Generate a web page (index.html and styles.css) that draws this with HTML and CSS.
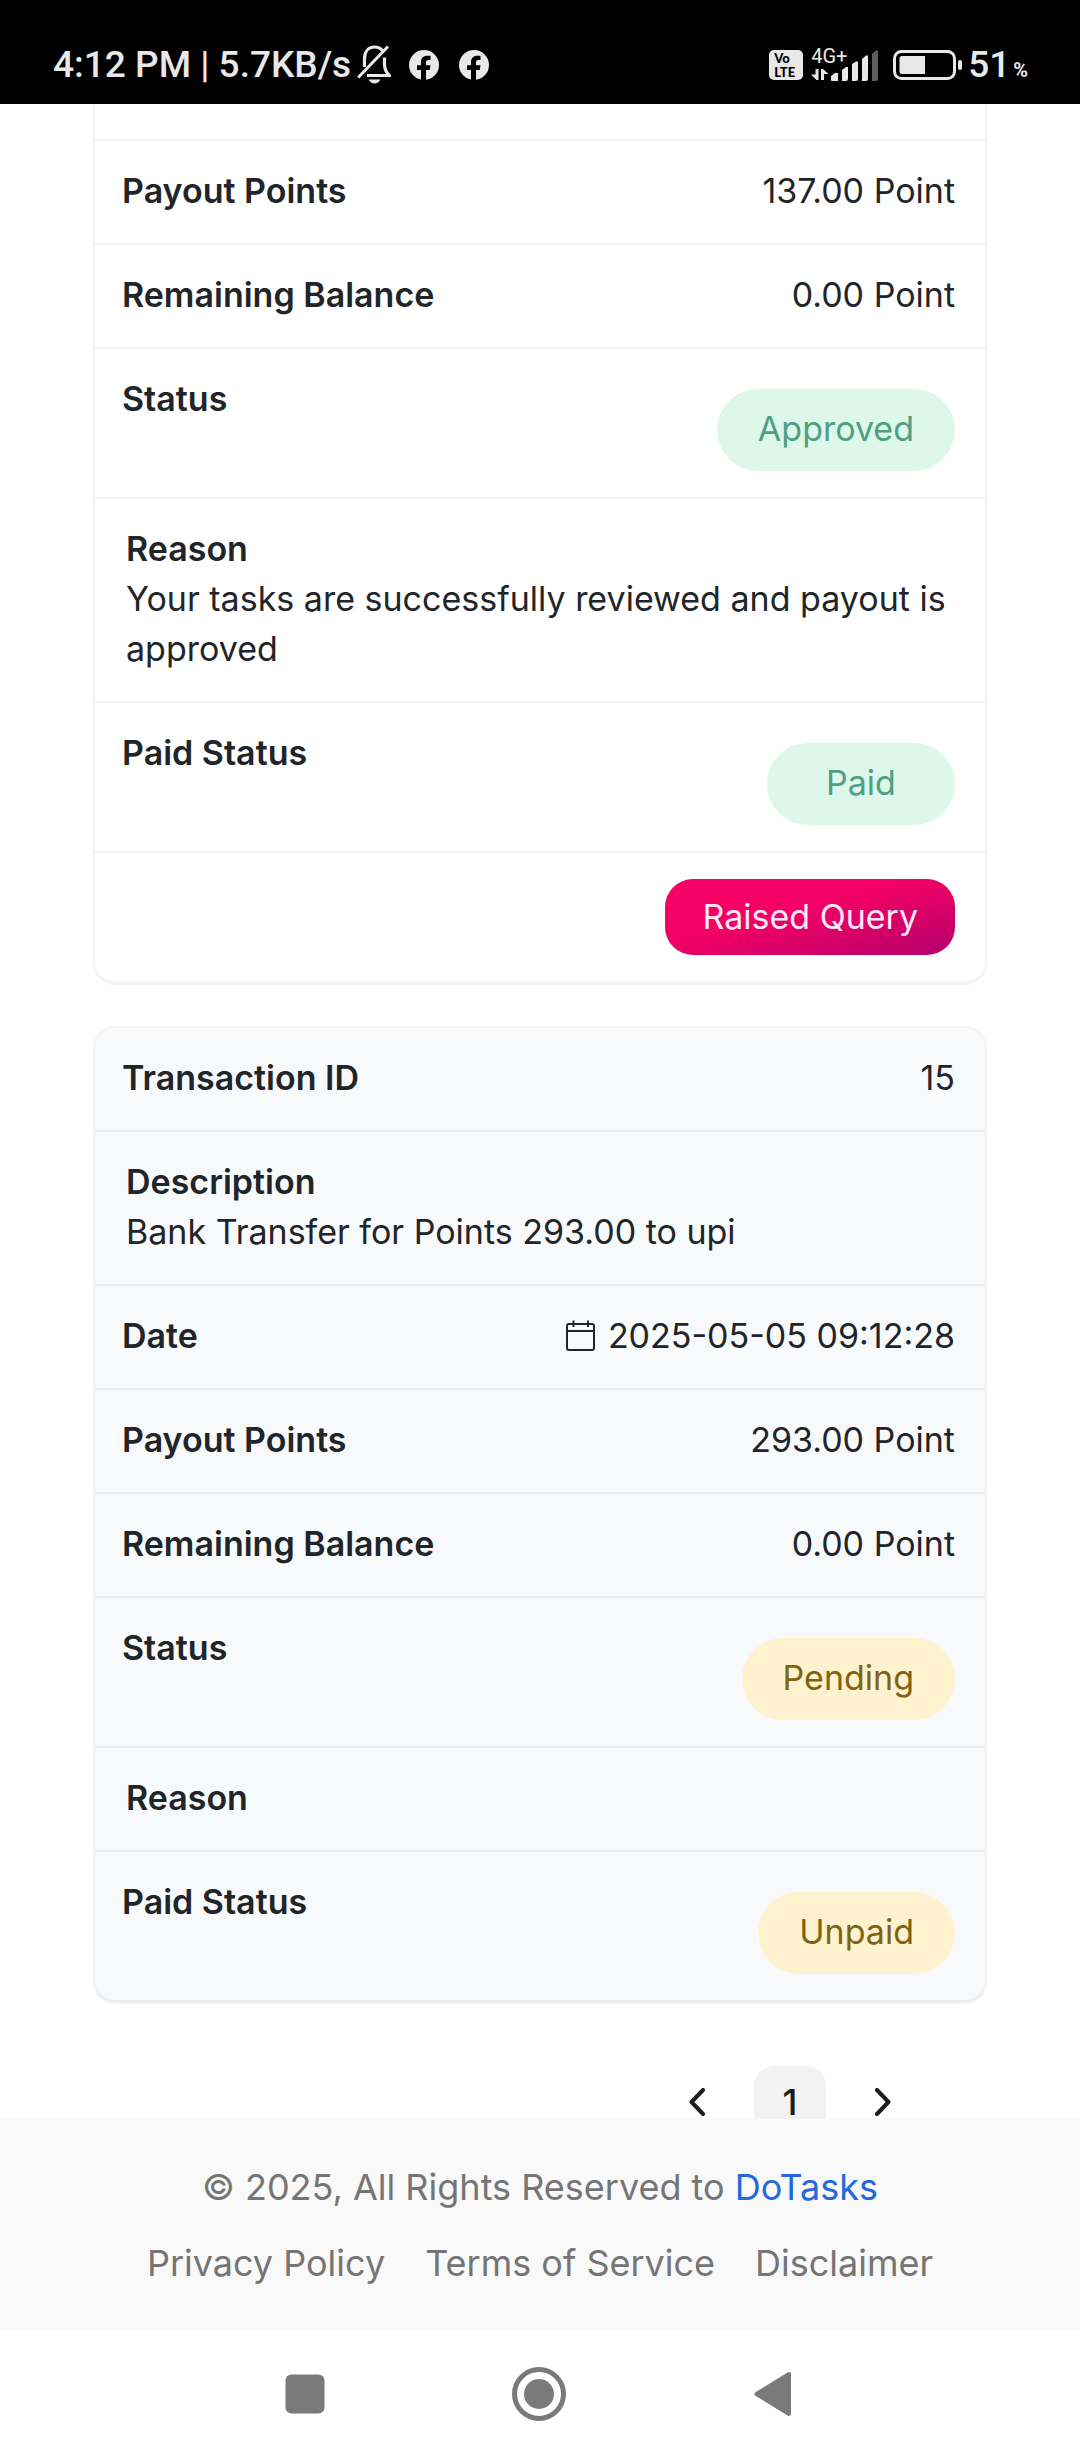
FILE: index.html
```html
<!DOCTYPE html>
<html lang="en">
<head>
<meta charset="utf-8">
<meta name="viewport" content="width=device-width, initial-scale=1">
<title>DoTasks - Transactions</title>
<link rel="stylesheet" href="styles.css">
</head>
<body>
<div class="screen">
  <header class="status-bar">
    <div class="status-left">
      <span class="clock">4:12 PM | 5.7KB/s</span>
      <svg class="bell" width="34" height="40" viewBox="0 0 34 40" aria-hidden="true">
        <path d="M7.500 22V14C7.500 6.500 11.500 2 17.500 2C21 2 23.500 3.200 25.500 5.500M27.500 12.500V19C27.500 24 29 27.500 32.500 30.500H10" fill="none" stroke="#e8e8e8" stroke-width="3.200"/>
        <path d="M1.200 32.500L31 1.500" stroke="#e8e8e8" stroke-width="3"/>
        <path d="M11.500 34.500H23.500C22 37.300 20 38.500 17.500 38.500S13 37.300 11.500 34.500Z" fill="#e8e8e8"/>
      </svg>
      <svg width="30" height="30" viewBox="0 0 30 30" aria-hidden="true">
        <circle cx="15" cy="15" r="15" fill="#e8e8e8"/>
        <path d="M12 30V20H8V15.300H12V12.500C12 8 14.200 5.800 18.500 5.800H21.500V10H19.300C17.500 10 17 10.800 17 12.500V15.300H21.500L20.800 20H17V30Z" fill="#000"/>
      </svg>
      <svg width="30" height="30" viewBox="0 0 30 30" aria-hidden="true">
        <circle cx="15" cy="15" r="15" fill="#e8e8e8"/>
        <path d="M12 30V20H8V15.300H12V12.500C12 8 14.200 5.800 18.500 5.800H21.500V10H19.300C17.500 10 17 10.800 17 12.500V15.300H21.500L20.800 20H17V30Z" fill="#000"/>
      </svg>
    </div>
    <div class="status-right">
      <span class="volte"><span>Vo</span><span>LTE</span></span>
      <span class="network">
        <span class="network-type">4G+</span>
        <svg width="69" height="31" viewBox="0 0 69 31" aria-hidden="true">
          <g fill="#e8e8e8">
            <path d="M4.500 19H7.500V30H5.500L0 24.500H4.500ZM10 19H12L17.500 24H13V30H10Z"/>
            <path d="M20 26L24 23H27V31H21Q20 31 20 30ZM31 20L35 17H37V29Q37 31 35 31H31ZM41 14L45 11.500H47V29Q47 31 45 31H41ZM51 9L55 5.500H57V29Q57 31 55 31H51Z"/>
          </g>
          <path d="M61 4L65 .5H67V29Q67 31 65 31H61Z" fill="#5c5c5c"/>
        </svg>
      </span>
      <svg class="battery" width="69" height="30" viewBox="0 0 69 30" aria-hidden="true">
        <rect x="1.500" y="1.500" width="60" height="27" rx="7" fill="none" stroke="#e8e8e8" stroke-width="3"/>
        <path d="M9 6H32V24H9Q6.500 24 6.500 21.500V8.500Q6.500 6 9 6Z" fill="#e8e8e8"/>
        <rect x="65" y="10" width="4" height="10" rx="2" fill="#e8e8e8"/>
      </svg>
      <span class="charge">51<small>%</small></span>
    </div>
  </header>

  <main class="content">
    <dl class="card card-continued">
      <div class="row row-tail"></div>
      <div class="row"><dt>Payout Points</dt><dd>137.00 Point</dd></div>
      <div class="row"><dt>Remaining Balance</dt><dd>0.00 Point</dd></div>
      <div class="row row-badge"><dt>Status</dt><dd><span class="badge badge-success">Approved</span></dd></div>
      <div class="row row-stacked"><dt>Reason</dt><dd>Your tasks are successfully reviewed and payout is approved</dd></div>
      <div class="row row-badge"><dt>Paid Status</dt><dd><span class="badge badge-success">Paid</span></dd></div>
      <div class="row row-action"><dd><button class="query-button" type="button">Raised Query</button></dd></div>
    </dl>

    <dl class="card card-striped">
      <div class="row"><dt>Transaction ID</dt><dd>15</dd></div>
      <div class="row row-stacked"><dt>Description</dt><dd>Bank Transfer for Points 293.00 to upi</dd></div>
      <div class="row">
        <dt>Date</dt>
        <dd class="date">
          <svg width="30" height="32" viewBox="0 0 30 32" fill="none" stroke="#212529" stroke-width="2" aria-hidden="true">
            <rect x="1" y="4" width="27" height="26" rx="2"/>
            <path d="M1 11H28M7.500 .5V7M22 .5V7"/>
          </svg>
          2025-05-05 09:12:28
        </dd>
      </div>
      <div class="row"><dt>Payout Points</dt><dd>293.00 Point</dd></div>
      <div class="row"><dt>Remaining Balance</dt><dd>0.00 Point</dd></div>
      <div class="row row-badge"><dt>Status</dt><dd><span class="badge badge-warning">Pending</span></dd></div>
      <div class="row row-stacked"><dt>Reason</dt><dd></dd></div>
      <div class="row row-badge"><dt>Paid Status</dt><dd><span class="badge badge-warning">Unpaid</span></dd></div>
    </dl>

    <nav class="pagination" aria-label="Pages">
      <button class="page-button" type="button" aria-label="Previous page">
        <svg width="16" height="28" viewBox="0 0 16 28" aria-hidden="true"><path d="M14 2L2.500 14L14 26" /></svg>
      </button>
      <button class="page-button page-current" type="button" aria-current="page">1</button>
      <button class="page-button" type="button" aria-label="Next page">
        <svg width="16" height="28" viewBox="0 0 16 28" aria-hidden="true"><path d="M2 2L13.500 14L2 26" /></svg>
      </button>
    </nav>
  </main>

  <footer class="footer">
    <p class="copyright">© 2025, All Rights Reserved to <a class="brand" href="#">DoTasks</a></p>
    <nav class="footer-links" aria-label="Legal">
      <a href="#">Privacy Policy</a>
      <a href="#">Terms of Service</a>
      <a href="#">Disclaimer</a>
    </nav>
  </footer>

  <nav class="system-nav" aria-label="System">
    <button type="button" aria-label="Recent apps">
      <svg width="54" height="54" viewBox="0 0 54 54" fill="#7a7a7a"><rect x="7.500" y="7.500" width="39" height="39" rx="6"/></svg>
    </button>
    <button type="button" aria-label="Home">
      <svg width="54" height="54" viewBox="0 0 54 54" fill="#7a7a7a"><circle cx="27" cy="27" r="24.500" fill="none" stroke="#7a7a7a" stroke-width="5"/><circle cx="27" cy="27" r="15"/></svg>
    </button>
    <button type="button" aria-label="Back">
      <svg width="54" height="54" viewBox="0 0 54 54" fill="#7a7a7a" stroke="#7a7a7a" stroke-width="4" stroke-linejoin="round"><path d="M10.500 27L43 7V47Z"/></svg>
    </button>
  </nav>
</div>
</body>
</html>
```
FILE: styles.css
```css
* {
  box-sizing: border-box;
}

body {
  margin: 0;
  background: #fff;
  color: #212529;
  font-family: Inter, "Liberation Sans", sans-serif;
  font-size: 34px;
  line-height: 50px;
}

button {
  margin: 0;
  padding: 0;
  border: 0;
  background: none;
  color: inherit;
  font: inherit;
}

a {
  color: inherit;
  text-decoration: none;
}

svg {
  display: block;
  flex: none;
}

.screen {
  display: flex;
  flex-direction: column;
  height: 100vh;
}

/* Phone status bar */
.status-bar {
  flex: none;
  display: flex;
  justify-content: space-between;
  padding: 43px 52px 17px 53px;
  background: #000;
  color: #e8e8e8;
  font-family: Roboto, "Liberation Sans", sans-serif;
  font-size: 37px;
  font-weight: 500;
  line-height: 44px;
}

.status-left,
.status-right {
  display: flex;
  align-items: center;
}

.status-left {
  gap: 20px;
}

.clock {
  margin-right: -14px;
}

.bell {
  margin-right: -2px;
}

.volte {
  display: flex;
  flex-direction: column;
  justify-content: center;
  width: 34px;
  height: 30px;
  margin-right: 8px;
  padding-left: 5px;
  border-radius: 5px;
  background: #e8e8e8;
  color: #000;
  font-family: Lato, sans-serif;
  font-size: 13px;
  font-weight: 900;
  line-height: 14px;
}

.network {
  position: relative;
  margin-right: 13px;
}

.network-type {
  position: absolute;
  top: -4px;
  left: 0;
  font-size: 20px;
  font-weight: 400;
  line-height: 20px;
}

.battery {
  margin-right: 6px;
}

.charge small {
  margin-left: 3px;
  font-size: 20px;
  font-weight: 700;
  line-height: 20px;
}

/* Transaction cards */
.content {
  flex: 1;
  min-height: 0;
  padding: 0 93px;
  overflow: hidden;
}

.card {
  margin: 0 0 41px;
  border: 2px solid #f3f3f4;
  border-radius: 22px;
}

.card-continued {
  border-top: 0;
  border-top-left-radius: 0;
  border-top-right-radius: 0;
}

.card-striped {
  background: #f8f9fb;
}

.row {
  display: flex;
  justify-content: space-between;
  padding: 25px 30px 27px 27px;
  border-bottom: 2px solid #f3f3f4;
}

.card-striped .row {
  border-color: #ebecee;
}

.row:last-child {
  border-radius: 0 0 20px 20px;
}

.row-tail {
  padding: 17px 30px 18px;
}

.row-badge {
  padding-bottom: 26px;
}

.row-stacked {
  display: block;
  padding-left: 31px;
}

.row-action {
  justify-content: flex-end;
  padding-top: 26px;
  padding-bottom: 26px;
}

dt {
  font-weight: 600;
}

dd {
  margin: 0;
}

.date {
  display: flex;
  align-items: center;
  gap: 12px;
}

.badge {
  display: block;
  min-width: 188px;
  margin-top: 15px;
  padding: 15px 41px 17px;
  border-radius: 41px;
  text-align: center;
}

.badge-success {
  background: #def7eb;
  color: #4fa083;
}

.badge-warning {
  background: #fff2cf;
  color: #806310;
}

.query-button {
  display: block;
  padding: 13px 37px;
  border-radius: 28px;
  background: linear-gradient(to bottom right, #f50064 40%, #b5006c);
  color: #ffe9f7;
}

/* Pagination */
.pagination {
  display: flex;
  justify-content: flex-end;
  gap: 21px;
  padding: 21px 68px 0 0;
}

.page-button {
  display: flex;
  align-items: center;
  justify-content: center;
  width: 72px;
  height: 72px;
  border-radius: 20px;
  color: #1c1c1c;
}

.page-button path {
  fill: none;
  stroke: #1c1c1c;
  stroke-width: 4;
  stroke-linecap: round;
  stroke-linejoin: round;
}

.page-current {
  background: #f2f2f2;
  font-size: 36px;
  font-weight: 500;
}

/* Footer */
.footer {
  flex: none;
  display: flex;
  flex-direction: column;
  align-items: center;
  gap: 26px;
  padding: 43px 24px 41px;
  background: #f9f9f9;
  color: #757575;
  font-size: 36px;
}

.copyright {
  margin: 0;
}

.brand {
  color: #2468dc;
}

.footer-links {
  display: flex;
  gap: 40px;
}

/* Phone navigation buttons */
.system-nav {
  flex: none;
  display: flex;
  justify-content: center;
  gap: 180px;
  padding: 38px 2px 39px 0;
}
```
